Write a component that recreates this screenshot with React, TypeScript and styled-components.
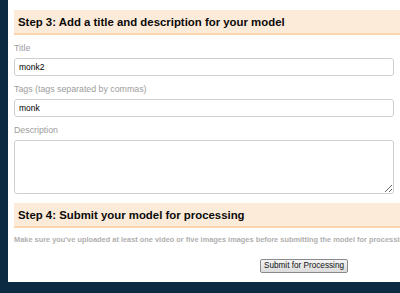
import React from 'react';
import styled, { createGlobalStyle } from 'styled-components';

const GlobalStyle = createGlobalStyle`
  html, body {
    margin: 0;
    padding: 0;
    background: #0c2a42;
    overflow: hidden;
  }
  body {
    font-family: "Liberation Sans", Arial, sans-serif;
  }
`;

const Page = styled.div`
  width: 400px;
  height: 293px;
  overflow: hidden;
  background: #0c2a42;
`;

const Panel = styled.div`
  margin-left: 8px;
  width: 592px;
  background: #fff;
  padding: 10px 6px 9px;
  box-sizing: border-box;
`;

const StepHeader = styled.h2<{ $top?: number }>`
  margin: ${(p) => p.$top ?? 0}px 0 0;
  height: 23px;
  line-height: 24px;
  padding: 0 4px;
  background: #fdebd9;
  border-bottom: 2px solid #fad6ae;
  font-size: 11.4px;
  font-weight: bold;
  color: #0a0a0a;
`;

const Label = styled.label`
  display: block;
  margin-top: 6px;
  line-height: 14px;
  font-size: 8.8px;
  color: #9c9c9c;
`;

const TextInput = styled.input`
  display: block;
  box-sizing: border-box;
  margin-top: 3px;
  width: 380px;
  height: 18px;
  padding: 0 4px;
  border: 1px solid #cfcfcf;
  border-radius: 3px;
  font-family: "Liberation Sans", Arial, sans-serif;
  font-size: 8.5px;
  color: #000;
  outline: none;
`;

const TextArea = styled.textarea`
  display: block;
  box-sizing: border-box;
  margin-top: 3px;
  width: 380px;
  height: 54px;
  padding: 3px 4px;
  border: 1px solid #cfcfcf;
  border-radius: 3px;
  font-family: "Liberation Sans", Arial, sans-serif;
  font-size: 8.5px;
  outline: none;
`;

const Note = styled.p`
  margin: 6px 0 0;
  line-height: 12px;
  font-size: 7.4px;
  font-weight: bold;
  color: #b0b0b0;
  white-space: nowrap;
`;

const ButtonRow = styled.div`
  display: flex;
  justify-content: center;
  margin-top: 13px;
`;

const SubmitButton = styled.button`
  height: 14px;
  padding: 0 3px;
  font-family: "Liberation Sans", Arial, sans-serif;
  font-size: 8.2px;
  line-height: 12px;
  color: #111;
  background: linear-gradient(#f4f4f4, #dcdcdc);
  border: 1px solid #8a8a8a;
  border-radius: 2px;
`;

export default function App() {
  return (
    <Page>
      <GlobalStyle />
      <Panel>
        <StepHeader>Step 3: Add a title and description for your model</StepHeader>
        <Label>Title</Label>
        <TextInput defaultValue="monk2" />
        <Label>Tags (tags separated by commas)</Label>
        <TextInput defaultValue="monk" />
        <Label>Description</Label>
        <TextArea />
        <StepHeader $top={9}>Step 4: Submit your model for processing</StepHeader>
        <Note>
          Make sure you've uploaded at least one video or five images images before submitting the model for processing.
        </Note>
        <ButtonRow>
          <SubmitButton>Submit for Processing</SubmitButton>
        </ButtonRow>
      </Panel>
    </Page>
  );
}
